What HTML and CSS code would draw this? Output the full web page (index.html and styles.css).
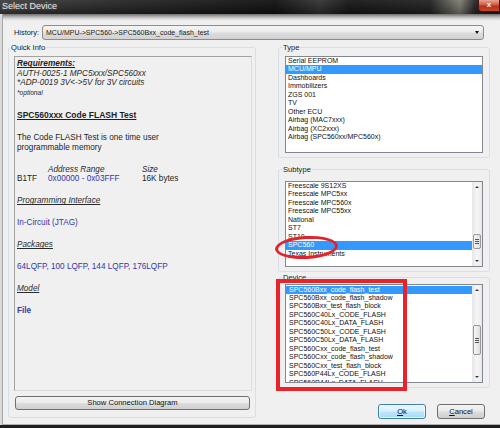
FILE: index.html
```html
<!DOCTYPE html>
<html>
<head>
<meta charset="utf-8">
<link rel="stylesheet" href="styles.css">
</head>
<body>
<div class="window">
  <div class="titlebar">
    <span class="title">Select Device</span>
    <span class="close">x</span>
  </div>
  <div class="client">
    <div class="history">
      <span class="hlabel">History:</span>
      <div class="combo">
        <span class="combo-text">MCU/MPU-&gt;SPC560-&gt;SPC560Bxx_code_flash_test</span>
        <span class="combo-arrow"></span>
      </div>
    </div>
    <div class="main">
      <div class="group qgroup">
        <div class="glabel">Quick Info</div>
        <div class="info">
          <div class="req">Requirements:</div>
          <div class="it">AUTH-0025-1 MPC5xxx/SPC560xx</div>
          <div class="it">*ADP-0019 3V&lt;-&gt;5V for 3V circuits</div>
          <div class="it small">*optional</div>
          <div class="heading">SPC560xxx Code FLASH Test</div>
          <div class="block">The Code FLASH Test is one time user<br>programmable memory</div>
          <div class="block addr">
            <span></span><span class="it">Address Range</span><span class="it">Size</span>
            <span>B1TF</span><span class="blue">0x00000 - 0x03FFF</span><span>16K bytes</span>
          </div>
          <div class="block sec">Programming Interface</div>
          <div class="block blue">In-Circuit (JTAG)</div>
          <div class="block sec">Packages</div>
          <div class="block blue">64LQFP, 100 LQFP, 144 LQFP, 176LQFP</div>
          <div class="block sec">Model</div>
          <div class="block blue bold">File</div>
        </div>
        <div class="btn wide">Show Connection Diagram</div>
      </div>
      <div class="right">
        <div class="group tgroup">
          <div class="glabel rl">Type</div>
          <div class="list type-list">
            <div class="rows">
              <div class="row">Serial EEPROM</div>
              <div class="row sel">MCU/MPU</div>
              <div class="row">Dashboards</div>
              <div class="row">Immobilizers</div>
              <div class="row">ZGS 001</div>
              <div class="row">TV</div>
              <div class="row">Other ECU</div>
              <div class="row">Airbag (MAC7xxx)</div>
              <div class="row">Airbag (XC2xxx)</div>
              <div class="row">Airbag (SPC560xx/MPC560x)</div>
            </div>
          </div>
        </div>
        <div class="group sgroup">
          <div class="glabel rl">Subtype</div>
          <div class="list sub-list">
            <div class="rows">
              <div class="row">Freescale 9S12XS</div>
              <div class="row">Freescale MPC5xx</div>
              <div class="row">Freescale MPC560x</div>
              <div class="row">Freescale MPC55xx</div>
              <div class="row">National</div>
              <div class="row">ST7</div>
              <div class="row">ST10</div>
              <div class="row sel">SPC560</div>
              <div class="row">Texas Instruments</div>
            </div>
            <div class="sb">
              <div class="sb-btn"><span class="tri-up"></span></div>
              <div class="sb-track"><div class="thumb thumb-sub"><span class="grip"></span></div></div>
              <div class="sb-btn"><span class="tri-down"></span></div>
            </div>
          </div>
          <div class="ellipse"></div>
        </div>
        <div class="group dgroup">
          <div class="glabel rl">Device</div>
          <div class="list dev-list">
            <div class="rows dev-rows">
              <div class="row sel">SPC560Bxx_code_flash_test</div>
              <div class="row">SPC560Bxx_code_flash_shadow</div>
              <div class="row">SPC560Bxx_test_flash_block</div>
              <div class="row">SPC560C40Lx_CODE_FLASH</div>
              <div class="row">SPC560C40Lx_DATA_FLASH</div>
              <div class="row">SPC560C50Lx_CODE_FLASH</div>
              <div class="row">SPC560C50Lx_DATA_FLASH</div>
              <div class="row">SPC560Cxx_code_flash_test</div>
              <div class="row">SPC560Cxx_code_flash_shadow</div>
              <div class="row">SPC560Cxx_test_flash_block</div>
              <div class="row">SPC560P44Lx_CODE_FLASH</div>
              <div class="row">SPC560P44Lx_DATA_FLASH</div>
            </div>
            <div class="sb">
              <div class="sb-btn"><span class="tri-up"></span></div>
              <div class="sb-track"><div class="thumb thumb-dev"><span class="grip"></span></div></div>
              <div class="sb-btn"><span class="tri-down"></span></div>
            </div>
          </div>
          <div class="redbox"></div>
        </div>
        <div class="actions">
          <div class="btn ok"><u>O</u>k</div>
          <div class="btn cancel"><u>C</u>ancel</div>
        </div>
      </div>
    </div>
  </div>
  <div class="taskbar"></div>
</div>
</body>
</html>
```
FILE: styles.css
```css
* { box-sizing: border-box; }
html, body { margin: 0; padding: 0; }
body {
  width: 500px;
  height: 428px;
  overflow: hidden;
  font-family: "Liberation Sans", Arial, sans-serif;
  color: #1a1a1a;
  background: #f0f0f0;
}
.window {
  width: 500px;
  height: 428px;
  display: flex;
  flex-direction: column;
  background: #f0f0f0;
}
.titlebar {
  height: 14px;
  display: flex;
  align-items: flex-start;
  justify-content: space-between;
  background:
    linear-gradient(to bottom, rgba(255,255,255,0.06), rgba(0,0,0,0.3)),
    linear-gradient(90deg, #3e3e3e 0%, #262626 25%, #111 55%, #333 64%, #161616 70%, #222 86%, #807f74 92%, #262626 95%, #1c1c1c 100%);
}
.title {
  font-size: 9px;
  line-height: 12px;
  color: #e4e4e4;
  padding-left: 2px;
  text-shadow: 0 0 3px rgba(255,255,255,0.35);
}
.close {
  width: 22px;
  height: 12px;
  border: 1px solid #4a160e;
  border-top: 0;
  border-radius: 0 0 0 4px;
  background: linear-gradient(to bottom, #e9a392 0%, #d0583f 45%, #b8311a 55%, #c8472c 100%);
  color: #fff;
  font-size: 8px;
  font-weight: bold;
  line-height: 10px;
  text-align: center;
}
.client {
  height: 411px;
  overflow: hidden;
  padding: 11px 0 0 8px;
  background:
    linear-gradient(to bottom, #6e6e6e 0, #b8b8b8 3px, #dcdcdc 5px, #f0f0f0 7px) no-repeat top left / 100% 7px,
    #f0f0f0;
  box-shadow: inset 2px 0 #dadada, inset 3px 0 #a8a8a8, inset 0 -1px #b0b0b0;
}
.history {
  display: flex;
  align-items: center;
  height: 15px;
  padding-left: 6px;
}
.hlabel {
  width: 28px;
  font-size: 7.4px;
  line-height: 15px;
}
.combo {
  width: 442px;
  height: 15px;
  border: 1px solid #8c8c8c;
  border-radius: 3px;
  background: linear-gradient(to bottom, #f4f4f4 0%, #ebebeb 48%, #dcdcdc 52%, #d2d2d2 100%);
  display: flex;
  align-items: center;
  justify-content: space-between;
  padding: 0 4px 0 3px;
}
.combo-text {
  font-size: 7px;
  line-height: 13px;
}
.combo-arrow {
  width: 0;
  height: 0;
  border-left: 2.5px solid transparent;
  border-right: 2.5px solid transparent;
  border-top: 3px solid #111;
}
.main {
  margin-top: 7px;
  display: grid;
  grid-template-columns: 248px 212px;
  column-gap: 22px;
  align-items: start;
}
.group {
  position: relative;
  border: 1px solid #d5dfe5;
  border-radius: 3px;
}
.glabel {
  display: block;
  width: max-content;
  height: 9px;
  margin: -5px 0 0 -4px;
  padding: 0 1px;
  background: #f0f0f0;
  font-size: 7.6px;
  line-height: 9px;
  color: #1a1a1a;
}
.glabel.rl { margin-left: -3px; }
.qgroup { padding: 0 3px 7px 5px; }
.info {
  margin-top: 4px;
  height: 335px;
  border: 1px solid #a3a3a3;
  border-right-color: #dcdcdc;
  border-bottom-color: #dcdcdc;
  background: #f0f0f0;
  padding: 2.3px 0 0 2px;
  font-size: 8.2px;
  line-height: 9.4px;
  color: #1e1e1e;
}
.it { font-style: italic; color: #2a2a2a; }
.small { font-size: 6.6px; }
.req {
  font-size: 8.3px;
  font-weight: bold;
  font-style: italic;
  text-decoration: underline;
}
.heading {
  margin-top: 12.6px;
  font-size: 8.5px;
  line-height: 11px;
  font-weight: bold;
  text-decoration: underline;
}
.block { margin-top: 12.6px; }
.addr {
  display: grid;
  grid-template-columns: 31px 94px auto;
  line-height: 9.6px;
}
.sec {
  font-style: italic;
  text-decoration: underline;
  color: #2a2a2a;
}
.blue { color: #3636a8; }
.bold { font-weight: bold; }
.btn {
  border: 1px solid #707070;
  border-radius: 3px;
  background: linear-gradient(to bottom, #f4f4f4 0%, #ebebeb 48%, #dddddd 52%, #cfcfcf 100%);
  font-size: 7.6px;
  text-align: center;
  color: #111;
}
.wide {
  margin: 5px 2px 0 1px;
  height: 14px;
  line-height: 12px;
}
.right {
  display: flex;
  flex-direction: column;
}
.tgroup { padding: 0 6px 4px 6px; }
.sgroup { padding: 0 6px 4px 6px; margin-top: 11px; }
.dgroup { padding: 0 6px 4px 6px; margin-top: 5px; }
.list {
  display: flex;
  background: #fff;
  border: 1px solid #828790;
  overflow: hidden;
  width: 198px;
}
.type-list { margin-top: 4px; height: 97px; }
.sub-list { margin-top: 7px; height: 86px; }
.dev-list { margin-top: 2px; height: 99px; }
.rows {
  flex: 1;
  overflow: hidden;
  font-size: 7px;
  color: #111;
}
.dev-rows {
  font-size: 7px;
  padding-top: 0.5px;
}
.row {
  height: 8.47px;
  line-height: 8.47px;
  padding-left: 2px;
  white-space: nowrap;
}
.dev-rows .row { padding-left: 3px; }
.row.sel {
  background: #3399ff;
  color: #fff;
}
.sb {
  width: 10px;
  display: flex;
  flex-direction: column;
  background: linear-gradient(90deg, #e6e6e6, #f5f5f5 50%, #e9e9e9);
}
.sb-btn {
  height: 10px;
  display: flex;
  align-items: center;
  justify-content: center;
}
.tri-up, .tri-down {
  width: 0;
  height: 0;
  border-left: 2px solid transparent;
  border-right: 2px solid transparent;
}
.tri-up { border-bottom: 2.5px solid #3a3a3a; }
.tri-down { border-top: 2.5px solid #3a3a3a; }
.sb-track { flex: 1; }
.thumb {
  margin: 0 1px;
  border: 1px solid #9a9a9a;
  border-radius: 2px;
  background: linear-gradient(90deg, #f6f6f6, #dedede);
  display: flex;
  align-items: center;
  justify-content: center;
}
.thumb-sub { margin-top: 42px; height: 15px; }
.thumb-dev { margin-top: 30px; height: 30px; }
.grip {
  width: 4px;
  height: 5px;
  background: repeating-linear-gradient(to bottom, #555 0, #555 1px, transparent 1px, transparent 2px);
}
.ellipse {
  position: absolute;
  left: -4px;
  top: 66px;
  width: 63px;
  height: 23px;
  border: 3px solid #e3232b;
  border-radius: 50%;
  transform: rotate(-3deg);
}
.redbox {
  position: absolute;
  left: -3px;
  top: 1px;
  width: 131px;
  height: 112px;
  border: 4px solid #e8232a;
}
.actions {
  margin-top: 16px;
  display: flex;
  justify-content: flex-end;
  gap: 11px;
  padding-right: 5px;
}
.actions .btn {
  width: 48px;
  height: 15px;
  line-height: 13px;
}
.btn.ok {
  border-color: #3c7fb1;
  background: linear-gradient(to bottom, #eaf6fd 0%, #d9f0fc 48%, #bee6fd 52%, #a7d9f5 100%);
  box-shadow: inset 0 0 0 1px rgba(255,255,255,0.7);
}
.taskbar {
  height: 3px;
  background: #1e1e1e;
}
```
